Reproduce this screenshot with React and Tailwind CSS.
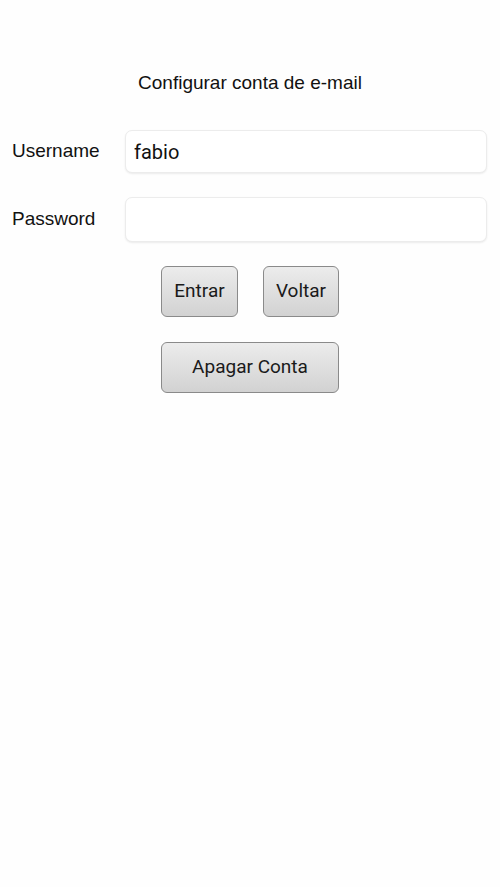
import React from "react";

const labelFont = { fontFamily: '"Liberation Sans", Arial, sans-serif' };

function Field({ label, value, type = "text", className = "" }) {
  return (
    <div className={"flex items-center " + className}>
      <label className="w-[125px] shrink-0 pl-3 text-[19px] text-[#111]">{label}</label>
      <input
        type={type}
        defaultValue={value}
        className="h-full flex-1 rounded-[7px] border border-[#ececec] bg-white px-2 text-[20px] text-[#111] shadow-[0_1px_2px_rgba(0,0,0,0.08)] outline-none"
        style={{ fontFamily: 'Roboto, "Noto Sans", sans-serif' }}
      />
    </div>
  );
}

function Btn({ children, className = "" }) {
  return (
    <button
      className={
        "h-[51px] rounded-[6px] border border-[#8a8a8a] bg-gradient-to-b from-[#ececec] to-[#d2d2d2] text-[19px] text-[#1a1a1a] " +
        className
      }
      style={{ fontFamily: 'Roboto, "Noto Sans", sans-serif' }}
    >
      {children}
    </button>
  );
}

export default function App() {
  return (
    <div className="min-h-[887px] w-[500px] bg-[#fefefe]" style={labelFont}>
      <div className="pt-[72px] text-center text-[19px] leading-[22px] text-[#111]">
        Configurar conta de e-mail
      </div>
      <div className="mt-[36px] pr-[13px]">
        <Field label="Username" value="fabio" className="h-[43px]" />
        <Field label="Password" value="" type="password" className="mt-[24px] h-[45px]" />
      </div>
      <div className="mt-[24px] flex flex-col items-center">
        <div className="flex gap-[25px]">
          <Btn className="w-[77px]">Entrar</Btn>
          <Btn className="w-[76px]">Voltar</Btn>
        </div>
        <Btn className="mt-[25px] w-[178px]">Apagar Conta</Btn>
      </div>
    </div>
  );
}
